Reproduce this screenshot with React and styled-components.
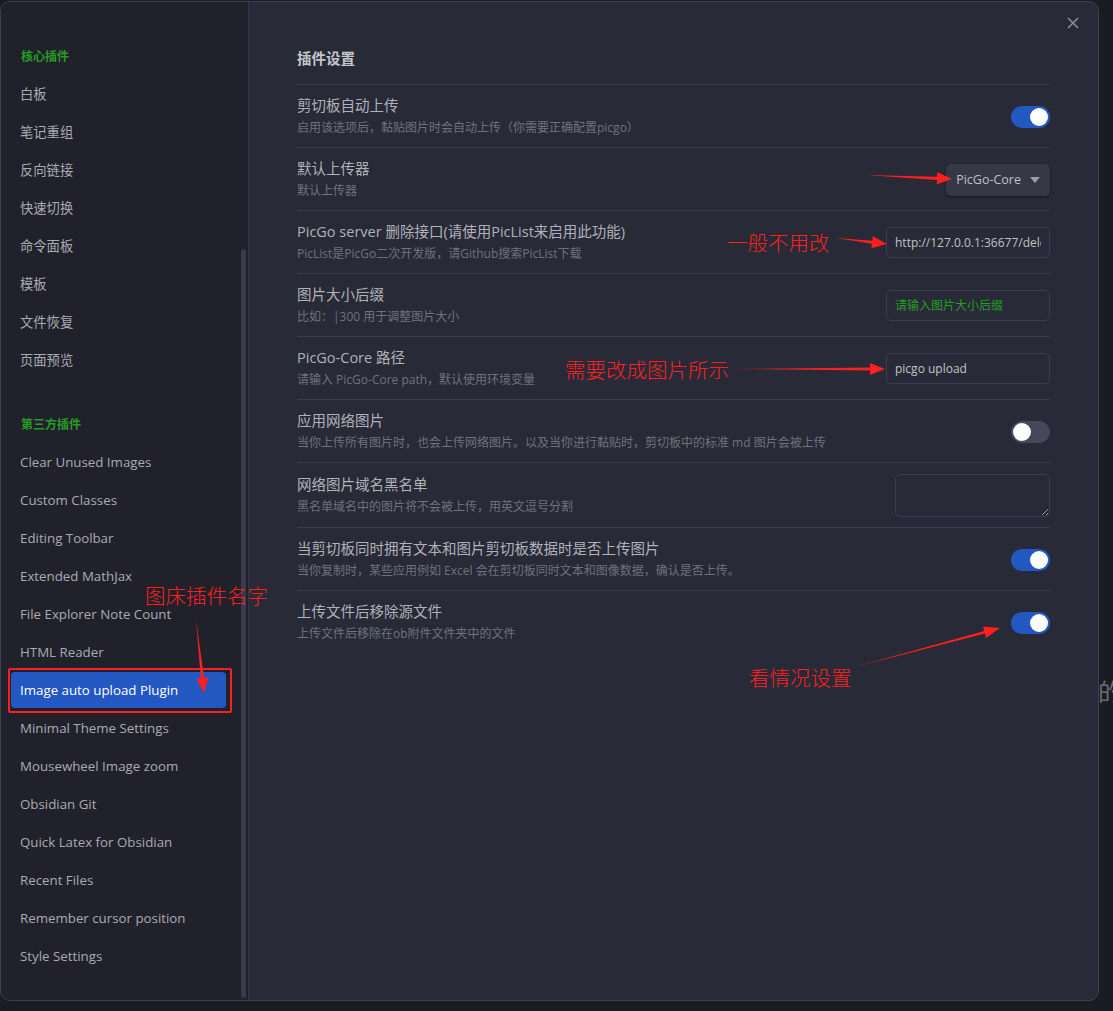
import styled, { createGlobalStyle } from 'styled-components';

const GlobalStyle = createGlobalStyle`
    html, body {
        margin: 0;
        padding: 0;
        background: #1c1c24;
        width: 1113px;
        height: 1011px;
        overflow: hidden;
        font-family: "Open Sans", "Noto Sans CJK SC", sans-serif;
    }
`

const Page = styled.div`
    position: relative;
    width: 1113px;
    height: 1011px;
    background: #1b1b23;
`
const Backdrop = styled.div`
    position: absolute;
    left: 1098px;
    top: 672px;
    font-size: 24px;
    color: #6b6d76;
    font-family: "Noto Sans CJK SC", sans-serif;
`
const Modal = styled.div`
    position: relative;
    box-sizing: border-box;
    width: 1099px;
    height: 1000px;
    margin-top: 1px;
    display: flex;
    border: 1px solid #3d3f52;
    border-radius: 10px;
    overflow: hidden;
    background: #282a37;
`
const Close = styled.div`
    position: absolute;
    top: 14px;
    right: 18px;
    width: 14px;
    height: 14px;
    color: #8b8e9a;
    & > svg { display: block; }
`
const Sidebar = styled.nav`
    position: relative;
    width: 248px;
    flex-shrink: 0;
    background: #21212b;
    border-right: 1px solid #34364a;
    padding-top: 35px;
    box-sizing: border-box;
`
const Scrollbar = styled.div`
    position: absolute;
    right: 2px;
    top: 247px;
    bottom: 2px;
    width: 5px;
    border-radius: 3px;
    background: #393b4d;
`
const Group = styled.div`
    font-size: 12px;
    font-weight: bold;
    color: #279c25;
    height: 38px;
    line-height: 38px;
    padding-left: 20px;
    margin-top: ${({ gap }) => gap || 0}px;
    font-family: "Noto Sans CJK SC", sans-serif;
`
const Item = styled.div`
    height: 36px;
    line-height: 36px;
    margin: 0 22px 0 10px;
    padding-left: 9px;
    border-top: 1px solid transparent;
    border-bottom: 1px solid transparent;
    background-clip: padding-box;
    border-radius: 4px;
    font-size: 13.3px;
    color: ${({ active }) => (active ? '#ffffff' : '#a9abb3')};
    background-color: ${({ active }) => (active ? '#2357c2' : 'transparent')};
    white-space: nowrap;
`
const Content = styled.main`
    flex: 1;
    padding: 0 48px 0 48px;
`
const Heading = styled.h2`
    margin: 45px 0 0;
    padding-bottom: 13px;
    font-size: 14.5px;
    line-height: 24px;
    font-weight: bold;
    color: #c4c5cb;
    border-bottom: 1px solid #3a3c4c;
`
const Row = styled.div`
    display: flex;
    align-items: center;
    gap: 16px;
    padding: 11px 0 10px;
    border-bottom: ${({ last }) => (last ? 'none' : '1px solid #3a3c4c')};
`
const Info = styled.div`
    flex: 1;
    min-width: 0;
`
const Title = styled.div`
    font-size: 14.5px;
    line-height: 20px;
    color: #b0b2ba;
`
const Desc = styled.div`
    margin-top: 3px;
    font-size: 12px;
    line-height: 18px;
    color: #6f727e;
    white-space: nowrap;
`
const Toggle = styled.div`
    position: relative;
    width: 39px;
    height: 22px;
    border-radius: 11px;
    background: ${({ on }) => (on ? '#2357c2' : '#45475a')};
    flex-shrink: 0;
    &::after {
        content: '';
        position: absolute;
        top: 2px;
        left: ${({ on }) => (on ? '19px' : '2px')};
        width: 18px;
        height: 18px;
        border-radius: 50%;
        background: #fff;
    }
`
const Select = styled.div`
    display: flex;
    align-items: center;
    gap: 9px;
    height: 32px;
    box-sizing: border-box;
    padding: 0 10px 0 10px;
    border-radius: 5px;
    background: #363847;
    box-shadow: 0 1px 3px rgba(0, 0, 0, 0.45);
    font-size: 12.5px;
    color: #bfc1c8;
    & > svg { color: #9b9da6; }
`
const Field = styled.input`
    width: 164px;
    height: 31px;
    box-sizing: border-box;
    padding: 0 8px;
    border: 1px solid #3c3e4f;
    border-radius: 5px;
    background: transparent;
    color: #c0c2c9;
    font-family: "Open Sans", "Noto Sans CJK SC", sans-serif;
    font-size: 12px;
    outline: none;
    &::placeholder { color: #279c25; }
`
const Area = styled.textarea`
    width: 155px;
    height: 43px;
    box-sizing: border-box;
    border: 1px solid #3c3e4f;
    border-radius: 5px;
    background: transparent;
    display: block;
`
const Annotation = styled.div`
    position: absolute;
    left: ${({ x }) => x}px;
    top: ${({ y }) => y}px;
    font-family: "Noto Sans CJK SC", sans-serif;
    font-size: 20.5px;
    line-height: 24px;
    color: #ff1f1f;
    white-space: nowrap;
    font-weight: 300;
`
const Highlight = styled.div`
    position: absolute;
    left: 8px;
    top: 667px;
    width: 220px;
    height: 41px;
    border: 2px solid #ff1f1f;
    border-radius: 2px;
`
const Overlay = styled.svg`
    position: absolute;
    left: 0;
    top: 0;
    pointer-events: none;
`

const core = ['白板', '笔记重组', '反向链接', '快速切换', '命令面板', '模板', '文件恢复', '页面预览']
const community = [
    'Clear Unused Images', 'Custom Classes', 'Editing Toolbar', 'Extended MathJax',
    'File Explorer Note Count', 'HTML Reader', 'Image auto upload Plugin',
    'Minimal Theme Settings', 'Mousewheel Image zoom', 'Obsidian Git',
    'Quick Latex for Obsidian', 'Recent Files', 'Remember cursor position', 'Style Settings',
]

// tapered arrow: thin tail, wider shaft near the head, triangle head
function arrow(x1, y1, x2, y2, head = 15, hw = 6, sw = 1.6) {
    const dx = x2 - x1, dy = y2 - y1
    const len = Math.hypot(dx, dy)
    const ux = dx / len, uy = dy / len
    const nx = -uy, ny = ux
    const bx = x2 - ux * head, by = y2 - uy * head
    const p = [
        [x1, y1],
        [bx + nx * sw, by + ny * sw],
        [bx + nx * hw, by + ny * hw],
        [x2, y2],
        [bx - nx * hw, by - ny * hw],
        [bx - nx * sw, by - ny * sw],
    ]
    return p.map(([a, b]) => `${a.toFixed(1)},${b.toFixed(1)}`).join(' ')
}

export default function App() {
    return (
        <Page>
            <GlobalStyle />
            <Backdrop>的</Backdrop>
            <Modal>
                <Sidebar>
                    <Group>核心插件</Group>
                    {core.map((c) => <Item key={c}>{c}</Item>)}
                    <Group gap={26}>第三方插件</Group>
                    {community.map((c) => (
                        <Item key={c} active={c === 'Image auto upload Plugin'}>{c}</Item>
                    ))}
                    <Scrollbar />
                </Sidebar>
                <Content>
                    <Heading>插件设置</Heading>
                    <Row>
                        <Info>
                            <Title>剪切板自动上传</Title>
                            <Desc>启用该选项后，黏贴图片时会自动上传（你需要正确配置picgo）</Desc>
                        </Info>
                        <Toggle on />
                    </Row>
                    <Row>
                        <Info>
                            <Title>默认上传器</Title>
                            <Desc>默认上传器</Desc>
                        </Info>
                        <Select>
                            PicGo-Core
                            <svg width="10" height="6" viewBox="0 0 10 6"><path d="M0 0h10L5 6z" fill="currentColor" /></svg>
                        </Select>
                    </Row>
                    <Row>
                        <Info>
                            <Title>PicGo server 删除接口(请使用PicList来启用此功能)</Title>
                            <Desc>PicList是PicGo二次开发版，请Github搜索PicList下载</Desc>
                        </Info>
                        <Field readOnly value="http://127.0.0.1:36677/delete" />
                    </Row>
                    <Row>
                        <Info>
                            <Title>图片大小后缀</Title>
                            <Desc>比如：|300 用于调整图片大小</Desc>
                        </Info>
                        <Field readOnly placeholder="请输入图片大小后缀" />
                    </Row>
                    <Row>
                        <Info>
                            <Title>PicGo-Core 路径</Title>
                            <Desc>请输入 PicGo-Core path，默认使用环境变量</Desc>
                        </Info>
                        <Field readOnly value="picgo upload" />
                    </Row>
                    <Row>
                        <Info>
                            <Title>应用网络图片</Title>
                            <Desc>当你上传所有图片时，也会上传网络图片。以及当你进行黏贴时，剪切板中的标准 md 图片会被上传</Desc>
                        </Info>
                        <Toggle />
                    </Row>
                    <Row>
                        <Info>
                            <Title>网络图片域名黑名单</Title>
                            <Desc>黑名单域名中的图片将不会被上传，用英文逗号分割</Desc>
                        </Info>
                        <Area readOnly />
                    </Row>
                    <Row>
                        <Info>
                            <Title>当剪切板同时拥有文本和图片剪切板数据时是否上传图片</Title>
                            <Desc>当你复制时，某些应用例如 Excel 会在剪切板同时文本和图像数据，确认是否上传。</Desc>
                        </Info>
                        <Toggle on />
                    </Row>
                    <Row last>
                        <Info>
                            <Title>上传文件后移除源文件</Title>
                            <Desc>上传文件后移除在ob附件文件夹中的文件</Desc>
                        </Info>
                        <Toggle on />
                    </Row>
                </Content>
                <Close>
                    <svg width="14" height="14" viewBox="0 0 14 14"><path d="M2 2l10 10M12 2L2 12" stroke="currentColor" strokeWidth="1.5" /></svg>
                </Close>
            </Modal>

            <Highlight />
            <Annotation x={727} y={229}>一般不用改</Annotation>
            <Annotation x={565} y={356}>需要改成图片所示</Annotation>
            <Annotation x={145} y={582}>图床插件名字</Annotation>
            <Annotation x={749} y={664}>看情况设置</Annotation>
            <Overlay width="1113" height="1011" viewBox="0 0 1113 1011">
                <g fill="#ff1f1f">
                    <polygon points={arrow(866, 174, 952, 178)} />
                    <polygon points={arrow(836, 237, 887, 243)} />
                    <polygon points={arrow(733, 368, 885, 368)} />
                    <polygon points={arrow(196, 618, 204, 692)} />
                    <polygon points={arrow(855, 666, 1000, 627, 16, 6, 1.3)} />
                </g>
            </Overlay>
        </Page>
    )
}
